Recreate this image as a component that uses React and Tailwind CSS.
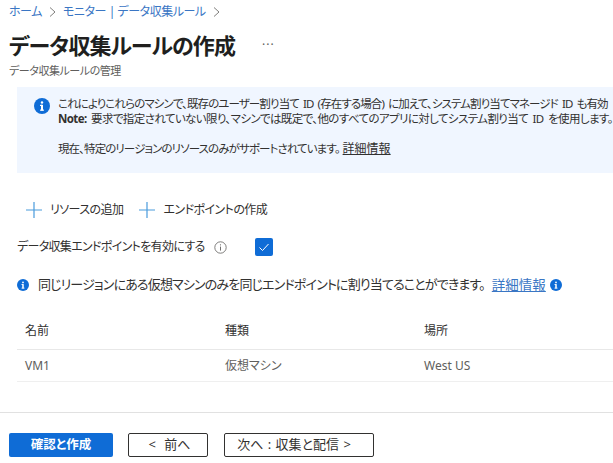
import React from "react";

const FONT = "font-['Noto_Sans','Noto_Sans_CJK_JP',sans-serif] [font-feature-settings:'palt']";

function InfoIcon({ size = 16, className = "" }) {
  return (
    <svg width={size} height={size} viewBox="0 0 16 16" className={`shrink-0 ${className}`}>
      <circle cx="8" cy="8" r="8" fill="#0f6cd6" />
      <rect x="7" y="6.8" width="2" height="5.8" fill="#fff" />
      <rect x="6" y="6.8" width="2" height="1.2" fill="#fff" />
      <rect x="6" y="11.6" width="4" height="1.1" fill="#fff" />
      <circle cx="8" cy="4.5" r="1.2" fill="#fff" />
    </svg>
  );
}

function Plus() {
  return (
    <svg width="16" height="16" viewBox="0 0 16 16" className="shrink-0">
      <path d="M8 0v16M0 8h16" stroke="#4a9bdc" strokeWidth="1.2" fill="none" />
    </svg>
  );
}

function Chevron() {
  return (
    <svg width="7" height="12" viewBox="0 0 7 12" className="shrink-0">
      <path d="M1 1.5 6 6 1 10.5" stroke="#605e5c" strokeWidth="0.8" fill="none" />
    </svg>
  );
}

export default function App() {
  return (
    <div className={`${FONT} w-[613px] h-[463px] overflow-hidden bg-white flex flex-col text-[12px] text-[#323130]`}>
      <nav className="flex items-center h-[24px] pl-[9px] gap-[7px] text-[#3a76c4] text-[12px] tracking-[-0.45px] shrink-0">
        <span>ホーム</span>
        <Chevron />
        <span>モニター | データ収集ルール</span>
        <Chevron />
      </nav>
      <div className="flex items-center pl-[9px] h-[40px] mt-[1px] shrink-0">
        <h1 className="text-[22px] font-semibold text-[#201f1e] tracking-[-0.9px] leading-none whitespace-nowrap">データ収集ルールの作成</h1>
        <span className="ml-[27px] text-[12px] text-[#605e5c] tracking-[1px] leading-none">···</span>
      </div>
      <p className="pl-[9px] text-[11px] text-[#605e5c] tracking-[-0.45px] leading-[16px] mt-[-2px] shrink-0">データ収集ルールの管理</p>
      <section className="ml-[17px] mt-[8px] h-[86px] bg-[#f0f6ff] flex pl-[17px] pt-[9px] shrink-0 whitespace-nowrap overflow-hidden">
        <InfoIcon size={16} className="mt-[2px]" />
        <div className="ml-[8px] text-[11.5px] tracking-[-0.9px] [word-spacing:2px] leading-[15px] text-[#323130]">
          <p>これによりこれらのマシンで、既存のユーザー割り当て ID (存在する場合) に加えて、システム割り当てマネージド ID も有効</p>
          <p className="tracking-[-0.6px]"><b className="font-bold">Note:</b> 要求で指定されていない限り、マシンでは既定で、他のすべてのアプリに対してシステム割り当て ID を使用します。</p>
          <p className="mt-[15px]">現在、特定のリージョンのリソースのみがサポートされています。<a className="underline text-[#323130] ml-[3px] text-[12px] tracking-normal">詳細情報</a></p>
        </div>
      </section>
      <div className="flex items-center ml-[26px] mt-[28px] h-[18px] text-[12px] tracking-[-0.55px] shrink-0">
        <Plus />
        <span className="ml-[8px]">リソースの追加</span>
        <span className="ml-[16px] flex items-center"><Plus /></span>
        <span className="ml-[8px]">エンドポイントの作成</span>
      </div>
      <div className="flex items-center ml-[17px] mt-[18px] h-[20px] text-[12px] tracking-[-0.67px] shrink-0">
        <span>データ収集エンドポイントを有効にする</span>
        <svg width="13" height="13" viewBox="0 0 13 13" className="ml-[9px]">
          <circle cx="6.5" cy="6.5" r="5.7" stroke="#605e5c" strokeWidth="0.8" fill="none" />
          <path d="M6.5 5.6v4" stroke="#605e5c" strokeWidth="0.9" />
          <circle cx="6.5" cy="3.8" r="0.6" fill="#605e5c" />
        </svg>
        <span className="ml-[28px] w-[18px] h-[18px] rounded-[2px] bg-[#0f6cd6] flex items-center justify-center">
          <svg width="12" height="12" viewBox="0 0 12 12"><path d="M1.5 6.5 4.5 9.5 10.5 3" stroke="#fff" strokeWidth="1" fill="none" /></svg>
        </span>
      </div>
      <div className="flex items-center ml-[17px] mt-[19px] h-[18px] text-[13px] whitespace-nowrap shrink-0">
        <InfoIcon size={12} />
        <span className="ml-[9px] tracking-[-0.85px]">同じリージョンにある仮想マシンのみを同じエンドポイントに割り当てることができます。</span>
        <a className="ml-[7px] underline text-[#3a76c4] text-[13.5px]">詳細情報</a>
        <InfoIcon size={12} className="ml-[4px]" />
      </div>
      <div className="ml-[17px] mt-[19px] text-[12px] shrink-0">
        <div className="grid grid-cols-[200px_199px_1fr] h-[37px] items-center border-b border-[#e8e8e8] pl-[8px] text-[#323130]">
          <span>名前</span><span>種類</span><span>場所</span>
        </div>
        <div className="grid grid-cols-[200px_199px_1fr] h-[32px] items-center border-b border-[#efefef] pl-[8px] text-[#605e5c]">
          <span>VM1</span><span>仮想マシン</span><span>West US</span>
        </div>
      </div>
      <div className="mt-[30px] border-t border-[#e1e1e1] flex items-start pl-[9px] gap-[15px] h-[50px] shrink-0 pt-[20px]">
        <button className="w-[104px] h-[24px] bg-[#0f6cd6] text-white rounded-[2px] font-semibold text-[12.5px]">確認と作成</button>
        <button className="w-[80px] h-[24px] border border-[#323130] rounded-[2px] text-[13px] [word-spacing:5px] pl-[3px]">&lt; 前へ</button>
        <button className="ml-[1px] w-[150px] h-[24px] border border-[#323130] rounded-[2px] text-[13px] [word-spacing:1px] pr-[10px]">次へ : 収集と配信 &gt;</button>
      </div>
    </div>
  );
}
